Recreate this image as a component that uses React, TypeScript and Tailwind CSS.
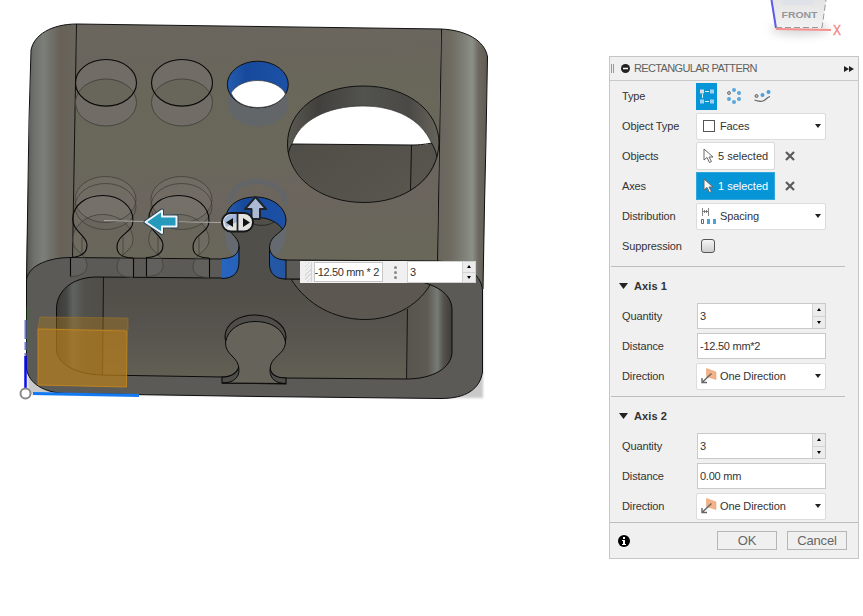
import type { ReactNode } from "react";

function GhostSlot({ x }: { x: number }) {
  return (
    <g transform={`translate(${x} 0)`} fill="none" strokeWidth="1">
      <path
        d="M72.7 219C73 205 86 195.5 102.7 195.5C120 195.5 133 206 133 221C133 233 117 234 117 246C117 253 123 258 133 258V278C123 278 117 273 117 266C117 254 133 250 133 240C133 227 120 215 102.7 215C86 215 73 226 72.7 240C73 252 87 252 87 265C87 272 82 276.500 70.500 276.500V257.500C82 257 87 252 87 245C87 235 73 232 72.7 219Z"
        fill="#9b9993"
        fillOpacity=".1"
      />
      <ellipse cx="105.500" cy="199.500" rx="30.500" ry="23" fill="#9b9993" fillOpacity=".12" stroke="#3e3c37" strokeOpacity=".75" />
      <ellipse cx="105.500" cy="206.500" rx="30.500" ry="23" stroke="#3e3c37" strokeOpacity=".75" />
      <path d="M70.500 276.500C82 276.500 87 272 87 265C87 253 72.700 252 72.700 240C73 226 86 214.500 102.700 214.500C120 214.500 133 227 133 240C133 252 117 254 117 267C117 274 123 277.500 133 277.500" stroke="#42403b" strokeOpacity=".8" />
      <path d="M82 237V255M123 237V255" stroke="#42403b" strokeOpacity=".8" />
      <path d="M70.500 257.500C82 257 87 252 87 245C87 235 72.700 232 72.700 219C73 205 86 195.500 102.700 195.500C120 195.500 133 206 133 221C133 233 117 234 117 247C117 254 123 258 133 258M70.500 257V276.500M133.500 258V277.500" stroke="#080808" strokeWidth="1.1" />
    </g>
  );
}

function GhostHole({ x }: { x: number }) {
  return (
    <g fill="none">
      <ellipse cx={x} cy="102.500" rx="30.500" ry="23.500" fill="#716d66" />
      <ellipse cx={x} cy="82.800" rx="30.500" ry="23.300" fill="#716d66" />
      <path d={`M${x - 27} 92.500C${x - 21} 83 ${x - 11} 79 ${x} 79C${x + 11} 79 ${x + 21} 83 ${x + 27} 92.500C${x + 21} 102 ${x + 11} 106 ${x} 106C${x - 11} 106 ${x - 21} 102 ${x - 27} 92.500Z`} fill="#68655b" />
      <ellipse cx={x} cy="102.500" rx="30.500" ry="23.500" stroke="#47453f" />
      <ellipse cx={x} cy="82.800" rx="30.500" ry="23.300" stroke="#080808" strokeWidth="1.1" />
    </g>
  );
}

function Model() {
  return (
    <svg className="absolute inset-0 block" width="863" height="616" viewBox="0 0 863 616" aria-hidden="true">
      <defs>
        <linearGradient id="top" x1="0" y1="0" x2=".08" y2="1">
          <stop offset="0" stopColor="#6a665e" />
          <stop offset=".12" stopColor="#6a655d" />
          <stop offset=".3" stopColor="#69665a" />
          <stop offset=".6" stopColor="#6a675b" />
          <stop offset=".75" stopColor="#6b655e" />
          <stop offset="1" stopColor="#69665a" />
        </linearGradient>
        <linearGradient id="leftSide">
          <stop offset="0" stopColor="#565550" />
          <stop offset=".16" stopColor="#6f716c" />
          <stop offset=".34" stopColor="#7c7f78" />
          <stop offset=".5" stopColor="#70706a" />
          <stop offset=".68" stopColor="#676157" />
          <stop offset="1" stopColor="#6a665d" />
        </linearGradient>
        <linearGradient id="rightSide">
          <stop offset="0" stopColor="#69645c" />
          <stop offset=".3" stopColor="#706c62" />
          <stop offset=".5" stopColor="#7c7e75" />
          <stop offset=".7" stopColor="#8b8f87" />
          <stop offset=".82" stopColor="#6c6a63" />
          <stop offset="1" stopColor="#625a50" />
        </linearGradient>
        <linearGradient id="inner" x1="0" y1="0" x2="0" y2="1">
          <stop offset="0" stopColor="#504e48" />
          <stop offset=".5" stopColor="#57534e" />
          <stop offset="1" stopColor="#626054" />
        </linearGradient>
        <linearGradient id="innerL">
          <stop offset="0" stopColor="#3b3a37" />
          <stop offset=".22" stopColor="#464744" />
          <stop offset=".36" stopColor="#5f635f" />
          <stop offset=".6" stopColor="#52514c" />
          <stop offset="1" stopColor="#504d47" />
        </linearGradient>
        <linearGradient id="innerR">
          <stop offset="0" stopColor="#58544d" />
          <stop offset=".45" stopColor="#5e5b54" />
          <stop offset=".66" stopColor="#777b75" />
          <stop offset=".8" stopColor="#52514c" />
          <stop offset="1" stopColor="#3d3b37" />
        </linearGradient>
        <linearGradient id="blue">
          <stop offset="0" stopColor="#255db0" />
          <stop offset=".3" stopColor="#174a9c" />
          <stop offset="1" stopColor="#1c51a6" />
        </linearGradient>
        <linearGradient id="brightBlue">
          <stop offset="0" stopColor="#2865c1" />
          <stop offset="1" stopColor="#2355a0" />
        </linearGradient>
        <linearGradient id="bigWall">
          <stop offset="0" stopColor="#5a5952" />
          <stop offset=".2" stopColor="#41403c" />
          <stop offset=".5" stopColor="#52524e" />
          <stop offset=".8" stopColor="#4a4945" />
          <stop offset="1" stopColor="#67645b" />
        </linearGradient>
        <linearGradient id="bigBack" x1="0" y1="0" x2="1" y2="1">
          <stop offset="0" stopColor="#4c4b45" />
          <stop offset="1" stopColor="#5b574f" />
        </linearGradient>
        <linearGradient id="cube" x1="0" y1="0" x2="0" y2="1">
          <stop offset="0" stopColor="#e4e4e5" />
          <stop offset="1" stopColor="#f3f3f4" />
        </linearGradient>
        <filter id="soft" x="-50%" y="-100%" width="200%" height="400%">
          <feGaussianBlur stdDeviation="5" />
        </filter>
        <filter id="edgeSoft">
          <feGaussianBlur stdDeviation="1.2" />
        </filter>
        <clipPath id="opening">
          <path d="M56.500 308C57 291 72 277 97 277L222 278L286 279L410 279C434 284 452 292 452 310V352C452 368 432 379 407 379L286 378L222 377L102 375C74 374 57 363 56.500 350Z" />
        </clipPath>
      </defs>

      <path d="M27 345L28 394L483 398V165H487Z" fill="#c9c9c9" filter="url(#edgeSoft)" />

      <path d="M77 24L441 29L437 261L286 260L222 259L70 258Z" fill="url(#top)" />
      <path d="M31 50C34 35 51 24 77 24L72.500 258C45 258 30 266 26 281Z" fill="url(#leftSide)" />
      <path d="M441 29C465 30 485 40 487.500 57L483 289C477 271 461 262 437 261Z" fill="url(#rightSide)" />
      <path d="M31 50C34 35 51 24 77 24L441 29C465 30 485 40 487.500 57L486 140L484.500 205L483 289M31 50L29 120L26.500 280" fill="none" stroke="#111" strokeWidth="1" />
      <path d="M76.500 24L72.500 258M441.500 29L437.500 262" stroke="#111" strokeWidth="1" />

      <path d="M26.500 280C28 267 45 258 70 257.500L222 259L286 260L437 261C463 262 481 273 482.500 290V372C480 389 466 398.500 441 398.500L260 396.500L67 393.500C43 393 29 383 26.500 369Z" fill="#5b5a57" stroke="#0d0d0d" />
      <path d="M56.500 308C57 291 72 277 97 277L222 278L286 279L410 279C434 284 452 292 452 310V352C452 368 432 379 407 379L286 378L222 377L102 375C74 374 57 363 56.500 350Z" fill="url(#inner)" />
      <g clipPath="url(#opening)">
        <rect x="56" y="276" width="47" height="102" fill="url(#innerL)" />
        <rect x="407" y="276" width="46" height="105" fill="url(#innerR)" />
        <path d="M103.500 277L102.500 376M407.500 309L406.500 380" stroke="#151515" />
        <path d="M291 279C307 305 335 319.500 365 319.500C391 319.500 417 307 430 285V279Z" fill="#5c5851" stroke="#111" />
      </g>
      <path d="M56.500 308C57 291 72 277 97 277L222 278L286 279L410 279C434 284 452 292 452 310V352C452 368 432 379 407 379L286 378L222 377L102 375C74 374 57 363 56.500 350Z" fill="none" stroke="#0b0b0b" />

      <path d="M222 383V377C232 377 239 372 239 364C239 350 225 350 225 336C226 323 239 315 255 315C272 315 286 325 286 337C286 351 270 351 270 366C270 374 276 378 286 378V384Z" fill="#4e4d49" stroke="#0a0a0a" strokeWidth="1.1" />
      <path d="M222 383C233 383 239 378 239 370C239 356 225 356 225.500 342C228 329 240 321.500 255 321.500C272 321.500 284 330 285.500 343C284 356 270 356 270 370C270 379 276 383.500 286 383.500Z" fill="#66635a" stroke="#0a0a0a" />

      <GhostHole x={106} />
      <GhostHole x={182} />
      <GhostSlot x={0} />
      <GhostSlot x={76} />

      <ellipse cx="257.800" cy="103.500" rx="30.500" ry="23" fill="#636669" />
      <ellipse cx="257.800" cy="84.500" rx="30.500" ry="23.300" fill="url(#blue)" stroke="#101010" />
      <path d="M231 93C236 85 246 80.500 258 80.500C270 80.500 282 86 285.500 94C281 102 271 107.500 258 107.500C245 107.500 235 102 231 93Z" fill="#fff" stroke="#333" strokeWidth=".7" />

      <path d="M229.500 203C231 189 242 181.500 257.500 181.500C273 181.500 285 190 286 205" fill="none" stroke="#636669" strokeWidth="5" />
      <path d="M222 258.500C233 258.500 239 254 239 246C239 236 225.500 232 225.500 220C226 205 239 197 255.500 197C272 197 286 207 286 221C286 233 269.500 234 269.500 247C269.500 255 276 260 286 260V279C277 279 270 274 268 274H240C237 278 232 278.500 222 278.500Z" fill="#514f49" />
      <path d="M239 260C239 273 233 278 224 279V281H285V279.500C276 279 270 274 269.500 260Z" fill="#514f49" />
      <path d="M225.500 222C226 206 239 197 255.500 197C272 197 286 207 286 221C286 224 285 227 283 230C278 222 268 217.500 257 217.500C242 217.500 231 223 227 229Z" fill="url(#blue)" />
      <path d="M286 221C287 232 286 246 277 256C271 254 269 247 270 242C274 236 283 233 286 221ZM225.500 221C224 238 226 252 235 256C241 251 239 243 235 238C230 232 226 228 225.500 221Z" fill="#646a70" />
      <path d="M222 258.500C233 258.500 239 254 239 246V262C239 273 233 278.500 222 278.500ZM286 260C276 260 269.500 255 269.500 247V265C270 274 275 279 286 279Z" fill="url(#brightBlue)" />
      <path d="M222 258.500C233 258.500 239 254 239 246C239 236 225.500 232 225.500 220C226 205 239 197 255.500 197C272 197 286 207 286 221C286 233 269.500 234 269.500 247C269.500 255 276 260 286 260V279C276 279 270 274 269.500 265V247M239 246V262C239 273 233 278.500 222 278.500M283 230C278 222 268 217.500 257 217.500" fill="none" stroke="#0c0c0c" />
      <path d="M250 222C257 227 268 226 274 222" fill="none" stroke="#282826" />

      <path d="M287.500 145C287 110 320 86 363 86C409 86 439 112 439 143L437 157C429 126 400 106 363 106C326 106 294 126 288 153Z" fill="url(#bigWall)" />
      <path d="M288 153C294 126 326 106 363 106C400 106 429 126 437 157C434 181 403 202.500 364 202.500C326 202.500 295 182 288 153Z" fill="url(#bigBack)" />
      <path d="M292 144C299 121 327 106 363 106C395 106 421 119 431.500 143C427 145 420 145 411 145Z" fill="#fff" />
      <path d="M287.500 145C287 110 320 86 363 86C409 86 439 112 439 143C438 179 405 202.500 364 202.500C321 202.500 288 178 287.500 145ZM292 144L411 145C420 145 427 144 432 143M411.500 145L410.500 190M288.500 153C289 150 290 147 292 144M431.500 143C434 147 436 152 437 157" fill="none" stroke="#111" />
      <path d="M292 144C299 121 327 106 363 106C395 106 421 119 431.500 143" fill="none" stroke="#333" strokeWidth=".7" />

      <path d="M104 220.500L146 221.500M176 221.800L224 222.500" stroke="#aaa9a4" />
      <path d="M145.500 222L162 210.500V216.500H176.500V226.500H162V233Z" fill="#258eb8" stroke="#30485a" strokeWidth="4" strokeLinejoin="round" />
      <path d="M145.500 222L162 210.500V216.500H176.500V226.500H162V233Z" fill="#259abd" stroke="#eef4f7" strokeWidth="2" strokeLinejoin="round" />
      <path d="M255.500 197L266 209H260V219H251.500V209H245Z" fill="#abb9d4" stroke="#20242a" strokeWidth="2" strokeLinejoin="round" />
      <rect x="222" y="213" width="31" height="18.500" rx="9" fill="#e2e2e3" stroke="#151719" strokeWidth="2" />
      <path d="M224 220C226 215 231 214 237 214V222L226 227Z" fill="#a3b8dc" />
      <path d="M237.500 213V231" stroke="#202020" strokeWidth="1.800" />
      <path d="M233 218V227L226 222.500ZM243 218V227L250 222.500Z" fill="#111" />

      <path d="M40 317L128 318V330L38 329Z" fill="#a97819" fillOpacity=".4" stroke="#a77823" strokeOpacity=".5" />
      <path d="M38 329L127 331L126.500 387L38 385Z" fill="#b57d1c" fillOpacity=".72" stroke="#bd8420" />
      <path d="M27.500 307V352" stroke="#298321" strokeOpacity=".8" strokeWidth="1.500" />
      <path d="M25.500 320V356" stroke="#7775da" strokeWidth="2" strokeDasharray="19 3 8 3" />
      <path d="M25.500 356V389" stroke="#090df0" strokeWidth="2.500" />
      <path d="M33 393.500L139 395.500" stroke="#1279f4" strokeWidth="3" />
      <circle cx="25.500" cy="393.500" r="5" fill="#fff" stroke="#8a8a8a" strokeWidth="2" />

      <ellipse cx="800" cy="29" rx="30" ry="6" fill="#999" opacity=".4" filter="url(#soft)" />
      <path d="M771 0H826L822 29L776 28Z" fill="url(#cube)" />
      <path d="M782 0H814V5H782Z" fill="#dfe2e8" />
      <path d="M771.500 0L776 28" stroke="#5b5be4" strokeWidth="2" />
      <path d="M776 27.500H822L826 0" fill="none" stroke="#999" strokeDasharray="6 3" />
      <path d="M776 29L831 30" stroke="#f58f8b" strokeWidth="2" />
      <text x="781.500" y="18" fontFamily="Liberation Sans, sans-serif" fontWeight="bold" fontSize="9" textLength="36" lengthAdjust="spacingAndGlyphs" fill="#95959c">FRONT</text>
      <text x="833" y="35" fontFamily="Liberation Sans, sans-serif" fontSize="15" textLength="8" lengthAdjust="spacingAndGlyphs" fill="#f4837e" stroke="#f4837e" strokeWidth=".4">X</text>
    </svg>
  );
}

function Row({ label, children }: { label: string; children: ReactNode }) {
  return (
    <div className="flex h-[30px] items-center pl-3">
      <div className="w-[74px] shrink-0">{label}</div>
      {children}
    </div>
  );
}

function Down() {
  return (
    <svg width="6" height="4" viewBox="0 0 6 4"><path d="M0 0H6L3 4Z" fill="#222" /></svg>
  );
}

function Dropdown({ icon, text }: { icon: ReactNode; text: string }) {
  return (
    <div className="flex h-[27px] w-[130px] items-center rounded-[2px] border border-[#dcdcdc] bg-white pr-1">
      <div className="flex w-[23px] justify-center">{icon}</div>
      <span className="flex-1">{text}</span>
      <Down />
    </div>
  );
}

function Spinner() {
  return (
    <div className="flex w-[13px] flex-col border-l border-[#d3d3d3] bg-[#ececec]">
      <div className="flex flex-1 items-center justify-center"><svg width="4" height="3"><path d="M0 3L2 0L4 3Z" fill="#000" /></svg></div>
      <div className="flex flex-1 items-center justify-center border-t border-[#d3d3d3]"><svg width="4" height="3"><path d="M0 0L2 3L4 0Z" fill="#000" /></svg></div>
    </div>
  );
}

function Field({ value, spinner = false }: { value: string; spinner?: boolean }) {
  return (
    <div className="ml-px flex h-[26px] w-[129px] items-stretch border border-[#c9c9c9] bg-white">
      <div className="flex flex-1 items-center pl-[2px] tracking-[-0.250px]">{value}</div>
      {spinner && <Spinner />}
    </div>
  );
}

function Cursor({ active = false }: { active?: boolean }) {
  return (
    <svg width="11" height="16" viewBox="0 0 11 16">
      <path d="M1 1V12L4 9.500L6.500 14.500L8.500 13.500L6 9H10Z" fill={active ? "#f6f6f6" : "#fff"} stroke="#666" strokeLinejoin="round" />
    </svg>
  );
}

function Selection({ count, active = false }: { count: number; active?: boolean }) {
  return (
    <>
      <div className={active ? "flex h-7 w-[79px] items-center gap-1 border border-[#35a6dc] bg-[#0696d7] pl-[6px] text-white" : "flex h-7 w-[79px] items-center gap-1 rounded-[2px] border border-[#d9d9d9] bg-white pl-[6px]"}>
        <Cursor active={active} />
        <span className="tracking-normal">{count} selected</span>
      </div>
      <svg className="ml-[10px]" width="10" height="10" viewBox="0 0 10 10"><path d="M1 1L9 9M9 1L1 9" stroke="#5a5a5a" strokeWidth="2.200" /></svg>
    </>
  );
}

const faceIcon = <div className="size-3 border border-[#555] bg-white" />;
const spacingIcon = (
  <svg width="16" height="16" viewBox="0 0 16 16">
    <path d="M1.500 0V8M7.500 0V8M2 3.500H7M3.500 2V5M5.500 2V5" stroke="#666" strokeWidth=".8" />
    <path d="M.5 11.500H2.500V15.500H.5Z" fill="#fff" stroke="#666" />
    <path d="M6 11H9V16H6ZM12 11H15V16H12Z" fill="#4da1dc" />
  </svg>
);
const directionIcon = (
  <svg width="16" height="16" viewBox="0 0 16 16">
    <path d="M5.500 .5L15 4V11.500L5.500 8.500Z" fill="#f4b288" stroke="#e9a172" strokeWidth=".6" />
    <path d="M10.500 5.500L1.500 14M1 10V14.500H6" fill="none" stroke="#666" strokeWidth="1.400" />
  </svg>
);

function Axis({ number, distance }: { number: number; distance: string }) {
  return (
    <section>
      <div className="flex h-[30px] items-center gap-[6px] pl-[9px] text-[11px] font-bold tracking-[0.100px]">
        <svg width="9" height="6" viewBox="0 0 9 6"><path d="M0 0H9L4.500 6Z" fill="#222" /></svg>
        <span>Axis {number}</span>
      </div>
      <Row label="Quantity"><Field value="3" spinner /></Row>
      <Row label="Distance"><Field value={distance} /></Row>
      <Row label="Direction"><Dropdown icon={directionIcon} text="One Direction" /></Row>
    </section>
  );
}

function Divider() {
  return <div className="flex h-[10px] items-center"><div className="ml-px h-px w-[234px] bg-[#bdbdbd]" /></div>;
}

function PatternPanel() {
  return (
    <div className="absolute left-[609px] top-[56px] flex h-[503px] w-[250px] flex-col border border-[#c6c6c6] bg-[#f0f0f0] text-[11px] tracking-[-0.120px] text-[#333]">
      <header className="flex h-6 items-center border-b border-[#c9c9c9] pl-[1px] pr-1 text-[#606060]">
        <div className="h-[9px] w-[3px] border-x border-[#999]" />
        <svg className="ml-[7px]" width="9" height="9" viewBox="0 0 9 9"><circle cx="4.500" cy="4.500" r="4.500" fill="#222" /><path d="M2 4.500H7" stroke="#fff" strokeWidth="1.500" /></svg>
        <span className="ml-1 flex-1 tracking-[-0.650px]">RECTANGULAR PATTERN</span>
        <svg width="10" height="6" viewBox="0 0 10 6"><path d="M0 0L5 3V0L10 3L5 6V3L0 6Z" fill="#222" /></svg>
      </header>
      <Row label="Type">
        <div className="flex h-[27px] w-[21px] items-center justify-center bg-[#0696d7]">
          <svg width="16" height="16" viewBox="0 0 16 16">
            <path d="M6 3.500H10M3.500 6V10M6 13.500H10" stroke="#e1f1f9" />
            <path d="M1 1.500H5V5.500H1Z" fill="#ddd" /><path d="M11 1.500H15V5.500H11ZM1 11.500H5V15.500H1ZM11 11.500H15V15.500H11Z" fill="#9bd1f2" />
          </svg>
        </div>
        <svg className="ml-[9px]" width="16" height="16" viewBox="0 0 16 16">
          <g fill="#58a7dd"><circle cx="8" cy="2" r="2" /><circle cx="13" cy="5" r="2" /><circle cx="13" cy="11" r="2" /><circle cx="8" cy="14" r="2" /><circle cx="3" cy="11" r="2" /></g>
          <circle cx="3" cy="5" r="1.500" fill="#bbb" stroke="#777" />
        </svg>
        <svg className="ml-3" width="17" height="14" viewBox="0 0 17 14">
          <path d="M.5 11C4 12 6 13 9 12S13 8 16 7.500" fill="none" stroke="#666" strokeWidth="1.200" />
          <circle cx="2.500" cy="7" r="1.500" fill="#bbb" stroke="#666" /><circle cx="8.500" cy="6" r="2" fill="#4d9fda" /><circle cx="14.500" cy="3" r="2" fill="#4d9fda" />
        </svg>
      </Row>
      <Row label="Object Type"><Dropdown icon={faceIcon} text="Faces" /></Row>
      <Row label="Objects"><Selection count={5} /></Row>
      <Row label="Axes"><Selection count={1} active /></Row>
      <Row label="Distribution"><Dropdown icon={spacingIcon} text="Spacing" /></Row>
      <Row label="Suppression"><div className="ml-[5px] size-[14px] rounded-[3px] border border-[#555] bg-linear-to-b from-[#f5f5f5] to-[#cfcfcf]" /></Row>
      <Divider />
      <Axis number={1} distance="-12.50 mm*2" />
      <Divider />
      <Axis number={2} distance="0.00 mm" />
      <footer className="mt-px flex flex-1 items-center border-t border-[#bdbdbd] pl-2 pr-[11px] text-[13px] tracking-[-0.150px] text-[#666]">
        <svg width="12" height="12" viewBox="0 0 12 12"><circle cx="6" cy="6" r="6" fill="#000" /><path d="M5 5H7V9H8V10H4V9H5V6H4V5ZM5 2H7V4H5Z" fill="#fff" /></svg>
        <div className="ml-auto flex h-[19px] w-[60px] items-center justify-center border border-[#b5b5b5]">OK</div>
        <div className="ml-[10px] flex h-[19px] w-[60px] items-center justify-center border border-[#b5b5b5]">Cancel</div>
      </footer>
    </div>
  );
}

function InlineInput() {
  return (
    <div className="absolute left-[300px] top-[261px] flex h-[22px] w-[176px] items-center bg-[#f0f0f0] text-[11px] text-[#333]">
      <div className="ml-[5px] h-5 w-[7px] border-r border-[#d3d3d3] bg-[repeating-linear-gradient(135deg,#d8d8d8_0px,#d8d8d8_1px,#f0f0f0_1px,#f0f0f0_3px)]" />
      <div className="ml-[2px] flex h-5 w-[69px] items-center justify-end overflow-hidden whitespace-nowrap border border-[#c6c6c6] bg-white pr-[3px] tracking-[-0.350px]">-12.50 mm * 2</div>
      <div className="flex w-6 flex-col items-center gap-[2px]"><i className="size-[3px] rounded-full bg-[#888]" /><i className="size-[3px] rounded-full bg-[#888]" /><i className="size-[3px] rounded-full bg-[#888]" /></div>
      <div className="flex h-[22px] flex-1 border border-[#d0d0d0] bg-white">
        <span className="flex flex-1 items-center pl-[2px]">3</span><Spinner />
      </div>
    </div>
  );
}

export default function App() {
  return (
    <main className="relative h-[616px] w-[863px] overflow-hidden bg-white font-['Liberation_Sans',Arial,sans-serif] leading-none">
      <Model />
      <InlineInput />
      <PatternPanel />
    </main>
  );
}
